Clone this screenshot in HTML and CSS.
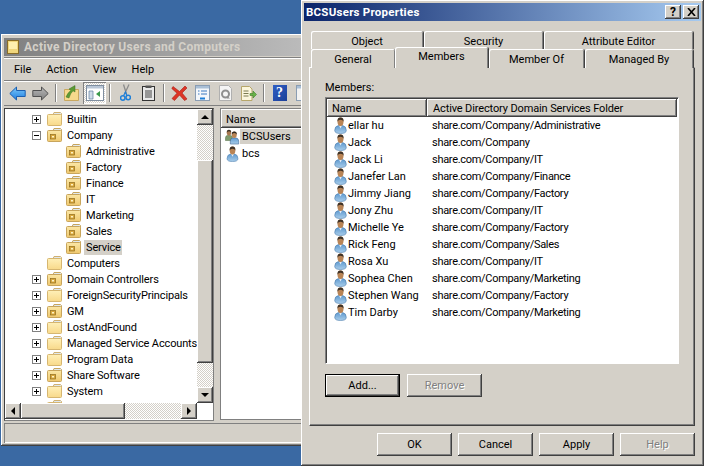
FILE: index.html
```html
<!DOCTYPE html>
<html lang="en">
<head>
    <meta charset="UTF-8">
    <title>BCSUsers Properties</title>
    <link rel="stylesheet" href="styles.css">
</head>
<body>
    <svg class="defs" width="0" height="0">
        <defs>
            <linearGradient id="folderFill" x1="0" y1="0" x2="0" y2="1">
                <stop offset="0" stop-color="#fff0b8"/>
                <stop offset="1" stop-color="#f8d98a"/>
            </linearGradient>
            <linearGradient id="ouFill" x1="0" y1="0" x2="0" y2="1">
                <stop offset="0" stop-color="#fbe7a6"/>
                <stop offset="1" stop-color="#efc86e"/>
            </linearGradient>
            <linearGradient id="bodyFill" x1="0" y1="0" x2="0" y2="1">
                <stop offset="0" stop-color="#5f9ad0"/>
                <stop offset="1" stop-color="#a9cdea"/>
            </linearGradient>
            <linearGradient id="backFill" x1="0" y1="0" x2="0" y2="1">
                <stop offset="0" stop-color="#7cc8fa"/>
                <stop offset="1" stop-color="#1f7fe0"/>
            </linearGradient>
            <linearGradient id="fwdFill" x1="0" y1="0" x2="0" y2="1">
                <stop offset="0" stop-color="#b8b8b8"/>
                <stop offset="1" stop-color="#808080"/>
            </linearGradient>
            <symbol id="folder" viewBox="0 0 15 14">
                <path d="M6 3l1-2.500h6.500l1 1V4z" fill="#dfe8ee" stroke="#d0b070"/>
                <rect x=".5" y="2.500" width="14" height="11" rx="1" fill="url(#folderFill)" stroke="#d6b670"/>
            </symbol>
            <symbol id="ou" viewBox="0 0 15 14">
                <path d="M6 3l1-2.500h6.500l1 1V4z" fill="#dfe8ee" stroke="#c8a55c"/>
                <rect x=".5" y="2.500" width="14" height="11" rx="1" fill="url(#ouFill)" stroke="#c8a55c"/>
                <rect x="3.500" y="6.500" width="5" height="4.500" fill="#d9a83e" stroke="#8f6c1c" stroke-width=".7"/>
                <rect x="5" y="8" width="2" height="1.500" fill="#fff3c4"/>
            </symbol>
            <symbol id="user" viewBox="0 0 13 17">
                <path d="M.7 13.500Q.7 9 4.500 8.500h4q3.800.5 3.800 5 0 3-5.800 3t-5.800-3z" fill="url(#bodyFill)" stroke="#4f7fae" stroke-width=".6"/>
                <path d="M5 8.500h3L6.500 11.500z" fill="#e9eef4"/>
                <ellipse cx="6.500" cy="4.800" rx="3" ry="4.200" fill="#b98455"/>
                <path d="M3.500 4.800Q3 .4 6.500.4T9.500 4.800Q9 2.800 6.500 2.800T3.500 4.800z" fill="#3f3226"/>
            </symbol>
            <symbol id="group" viewBox="0 0 17 17">
                <path d="M.5 12.500V9.500q0-2.500 2.500-3h3q2.500.5 2.500 3v3z" fill="#7f9a6c" stroke="#55704a" stroke-width=".6"/>
                <ellipse cx="4.500" cy="3.700" rx="2.500" ry="3.200" fill="#a9794f"/>
                <path d="M2 3.700Q1.800.4 4.500.4T7 3.700Q6.500 2 4.500 2T2 3.700z" fill="#3d3226"/>
                <path d="M6 16.500v-3.500q0-3 2.500-3.500h4q3 .5 3 3.500v3.500z" fill="url(#bodyFill)" stroke="#335d8c" stroke-width=".6"/>
                <ellipse cx="10.500" cy="6" rx="2.800" ry="3.600" fill="#b98455"/>
                <path d="M7.700 6Q7.400 2.300 10.500 2.300T13.300 6Q12.800 4 10.500 4T7.700 6z" fill="#2f2a24"/>
            </symbol>
            <symbol id="plus" viewBox="0 0 9 9">
                <rect x=".5" y=".5" width="8" height="8" fill="#fff" stroke="#808080"/>
                <path d="M2 4.500h5M4.500 2v5" stroke="#000"/>
            </symbol>
            <symbol id="minus" viewBox="0 0 9 9">
                <rect x=".5" y=".5" width="8" height="8" fill="#fff" stroke="#808080"/>
                <path d="M2 4.500h5" stroke="#000"/>
            </symbol>
        </defs>
    </svg>

    <div class="mmc">
        <div class="mmc-title">
            <svg class="app-icon" width="12" height="14" viewBox="0 0 12 14">
                <rect x=".5" y=".5" width="11" height="13" fill="#f0d67c" stroke="#8a6d28"/>
                <rect x="2" y="2" width="8" height="7" fill="#fff0b0"/>
            </svg>
            <span>Active Directory Users and Computers</span>
        </div>
        <div class="mmc-menu">
            <span>File</span><span>Action</span><span>View</span><span>Help</span>
        </div>
        <div class="mmc-toolbar">
            <span class="tool"><svg width="17" height="15" viewBox="0 0 17 15"><path d="M.8 7.500L7.500 1v3.500h8.700v6H7.500V14z" fill="url(#backFill)" stroke="#1c5fb0"/></svg></span>
            <span class="tool"><svg width="17" height="15" viewBox="0 0 17 15"><path d="M16.200 7.500L9.500 1v3.500H.8v6h8.700V14z" fill="url(#fwdFill)" stroke="#505050"/></svg></span>
            <i class="tool-sep"></i>
            <span class="tool"><svg width="15" height="16" viewBox="0 0 15 16"><path d="M.5 4.500h14v11H.5z" fill="#f6d98c" stroke="#c9a860"/><path d="M2 12q2-5 5-6.500L5 4l6-3.500V7L9 5.800Q6.500 8 5 13z" fill="#5c9a34" stroke="#3e7222" stroke-width=".5"/></svg></span>
            <span class="tool tool-on"><svg width="18" height="16" viewBox="0 0 18 16"><rect x=".5" y=".5" width="17" height="15" fill="#fff" stroke="#7f8ea0"/><rect x="1" y="1" width="16" height="2.500" fill="#b9c6d6"/><path d="M3 6h4v8H3z" fill="#cfdbe8" stroke="#5f7f9f" stroke-width=".7"/><path d="M14 6v6l-4-3z" fill="#3c9a4c"/></svg></span>
            <i class="tool-sep"></i>
            <span class="tool"><svg width="11" height="18" viewBox="0 0 11 18"><path d="M9 .5L4.500 10M3.500.5l3 9.500" stroke="#8c8c8c" stroke-width="1.300" fill="none"/><circle cx="2.800" cy="14" r="2.200" fill="none" stroke="#1f7fd8" stroke-width="1.500"/><circle cx="8.200" cy="13.500" r="2.200" fill="none" stroke="#1f7fd8" stroke-width="1.500"/><path d="M3.500 11.800L5.500 8l1.500 4" fill="none" stroke="#1f7fd8" stroke-width="1.200"/></svg></span>
            <span class="tool"><svg width="13" height="16" viewBox="0 0 13 16"><rect x=".5" y="1.500" width="12" height="14" fill="#e8e8e8" stroke="#333"/><rect x="3.500" y=".5" width="6" height="2.500" fill="#555"/><path d="M3 6h7M3 8h7M3 10h7M3 12h7" stroke="#444"/></svg></span>
            <i class="tool-sep"></i>
            <span class="tool"><svg width="17" height="16" viewBox="0 0 17 16"><path d="M2 1.500l6.500 5L14 1l2 2-5 5 5 6-2.500 1.500-5-5.500-5 5.500L1 13.500l5-5.300L.8 3.500z" fill="#dd3526" stroke="#a81c12" stroke-width=".6"/></svg></span>
            <span class="tool"><svg width="15" height="16" viewBox="0 0 15 16"><rect x=".5" y=".5" width="14" height="15" fill="#f4f7fb" stroke="#8a9db3"/><rect x="1" y="1" width="13" height="2.500" fill="#a9bfd6"/><path d="M3 6h1.500M6 6h6M3 9h1.500M6 9h6" stroke="#3b78c0"/><path d="M5 13.500h5" stroke="#1f7fd8" stroke-width="2"/></svg></span>
            <span class="tool"><svg width="13" height="16" viewBox="0 0 13 16"><path d="M.5.500h9l3 3v12H.5z" fill="#f4f4f4" stroke="#b0b0b0"/><circle cx="6.500" cy="9" r="3.500" fill="none" stroke="#8f8f8f" stroke-width="2"/><path d="M8 10.500l3 3H8z" fill="#8f8f8f"/></svg></span>
            <span class="tool"><svg width="16" height="15" viewBox="0 0 16 15"><path d="M.5.500h8l2.500 2.500v11.500H.5z" fill="#fbf6dc" stroke="#b6a66a"/><path d="M2.500 5h5M2.500 7.500h5M2.500 10h5" stroke="#7a7a50"/><path d="M9 7.500h3V5l3.500 3.500L12 12V9.500H9z" fill="#69b24a" stroke="#3f8228" stroke-width=".6"/></svg></span>
            <i class="tool-sep"></i>
            <span class="tool"><span class="tool-help">?</span></span>
            <span class="tool"><svg width="14" height="16" viewBox="0 0 14 16"><rect x=".5" y=".5" width="14" height="15" fill="#f2f2f2" stroke="#8a9db3"/><rect x="1" y="1" width="13" height="2.500" fill="#a9bfd6"/><path d="M5 6v7l5-3.500z" fill="#3c9a4c"/></svg></span>
        </div>
        <div class="mmc-panes">
            <div class="tree-pane">
                <div class="tree">
                    <div class="tree-row"><svg class="exp"><use href="#plus"/></svg><svg class="ico"><use href="#folder"/></svg><span>Builtin</span></div>
                    <div class="tree-row"><svg class="exp"><use href="#minus"/></svg><svg class="ico"><use href="#ou"/></svg><span>Company</span></div>
                    <div class="tree-row child"><svg class="ico"><use href="#ou"/></svg><span>Administrative</span></div>
                    <div class="tree-row child"><svg class="ico"><use href="#ou"/></svg><span>Factory</span></div>
                    <div class="tree-row child"><svg class="ico"><use href="#ou"/></svg><span>Finance</span></div>
                    <div class="tree-row child"><svg class="ico"><use href="#ou"/></svg><span>IT</span></div>
                    <div class="tree-row child"><svg class="ico"><use href="#ou"/></svg><span>Marketing</span></div>
                    <div class="tree-row child"><svg class="ico"><use href="#ou"/></svg><span>Sales</span></div>
                    <div class="tree-row child selected"><svg class="ico"><use href="#ou"/></svg><span>Service</span></div>
                    <div class="tree-row leaf"><svg class="ico"><use href="#folder"/></svg><span>Computers</span></div>
                    <div class="tree-row"><svg class="exp"><use href="#plus"/></svg><svg class="ico"><use href="#ou"/></svg><span>Domain Controllers</span></div>
                    <div class="tree-row"><svg class="exp"><use href="#plus"/></svg><svg class="ico"><use href="#folder"/></svg><span>ForeignSecurityPrincipals</span></div>
                    <div class="tree-row"><svg class="exp"><use href="#plus"/></svg><svg class="ico"><use href="#ou"/></svg><span>GM</span></div>
                    <div class="tree-row"><svg class="exp"><use href="#plus"/></svg><svg class="ico"><use href="#folder"/></svg><span>LostAndFound</span></div>
                    <div class="tree-row"><svg class="exp"><use href="#plus"/></svg><svg class="ico"><use href="#folder"/></svg><span>Managed Service Accounts</span></div>
                    <div class="tree-row"><svg class="exp"><use href="#plus"/></svg><svg class="ico"><use href="#folder"/></svg><span>Program Data</span></div>
                    <div class="tree-row"><svg class="exp"><use href="#plus"/></svg><svg class="ico"><use href="#ou"/></svg><span>Share Software</span></div>
                    <div class="tree-row"><svg class="exp"><use href="#plus"/></svg><svg class="ico"><use href="#folder"/></svg><span>System</span></div>
                    <div class="tree-row leaf"><svg class="ico"><use href="#folder"/></svg><span>Users</span></div>
                </div>
                <div class="vscroll">
                    <span class="sbtn"><i class="arr up"></i></span>
                    <span class="strack t-top"></span>
                    <span class="sthumb v"></span>
                    <span class="strack t-bot"></span>
                    <span class="sbtn"><i class="arr down"></i></span>
                </div>
                <div class="hscroll">
                    <span class="sbtn"><i class="arr left"></i></span>
                    <span class="sthumb h"></span>
                    <span class="strack t-fill"></span>
                    <span class="sbtn"><i class="arr right"></i></span>
                </div>
            </div>
            <div class="result-pane">
                <div class="result-head">Name</div>
                <div class="result-row"><svg class="ico-g"><use href="#group"/></svg><span class="picked">BCSUsers</span></div>
                <div class="result-row"><svg class="ico-g"><use href="#user"/></svg><span>bcs</span></div>
            </div>
        </div>
        <div class="mmc-status"></div>
    </div>

    <div class="dialog">
        <div class="dlg-title">
            <span>BCSUsers Properties</span>
            <div class="dlg-btns">
                <span class="cap-btn">?</span>
                <span class="cap-btn"><svg width="9" height="8" viewBox="0 0 9 8"><path d="M1 0l7 8M8 0L1 8" stroke="#000" stroke-width="1.600" fill="none"/></svg></span>
            </div>
        </div>
        <div class="tabs tabs-back">
            <span class="tab t-object">Object</span>
            <span class="tab t-security">Security</span>
            <span class="tab t-attr">Attribute Editor</span>
        </div>
        <div class="tabs tabs-front">
            <span class="tab t-general">General</span>
            <span class="tab t-members active">Members</span>
            <span class="tab t-memberof">Member Of</span>
            <span class="tab t-managed">Managed By</span>
        </div>
        <div class="panel">
            <div class="members-label">Members:</div>
            <div class="listview">
                <div class="lv-head">
                    <span class="lv-col col-name">Name</span>
                    <span class="lv-col col-folder">Active Directory Domain Services Folder</span>
                </div>
                <div class="lv-row"><svg class="ico-u"><use href="#user"/></svg><span class="cell-name">ellar hu</span><span class="cell-path">share.com/Company/Administrative</span></div>
                <div class="lv-row"><svg class="ico-u"><use href="#user"/></svg><span class="cell-name">Jack</span><span class="cell-path">share.com/Company</span></div>
                <div class="lv-row"><svg class="ico-u"><use href="#user"/></svg><span class="cell-name">Jack Li</span><span class="cell-path">share.com/Company/IT</span></div>
                <div class="lv-row"><svg class="ico-u"><use href="#user"/></svg><span class="cell-name">Janefer Lan</span><span class="cell-path">share.com/Company/Finance</span></div>
                <div class="lv-row"><svg class="ico-u"><use href="#user"/></svg><span class="cell-name">Jimmy Jiang</span><span class="cell-path">share.com/Company/Factory</span></div>
                <div class="lv-row"><svg class="ico-u"><use href="#user"/></svg><span class="cell-name">Jony Zhu</span><span class="cell-path">share.com/Company/IT</span></div>
                <div class="lv-row"><svg class="ico-u"><use href="#user"/></svg><span class="cell-name">Michelle Ye</span><span class="cell-path">share.com/Company/Factory</span></div>
                <div class="lv-row"><svg class="ico-u"><use href="#user"/></svg><span class="cell-name">Rick Feng</span><span class="cell-path">share.com/Company/Sales</span></div>
                <div class="lv-row"><svg class="ico-u"><use href="#user"/></svg><span class="cell-name">Rosa Xu</span><span class="cell-path">share.com/Company/IT</span></div>
                <div class="lv-row"><svg class="ico-u"><use href="#user"/></svg><span class="cell-name">Sophea Chen</span><span class="cell-path">share.com/Company/Marketing</span></div>
                <div class="lv-row"><svg class="ico-u"><use href="#user"/></svg><span class="cell-name">Stephen Wang</span><span class="cell-path">share.com/Company/Factory</span></div>
                <div class="lv-row"><svg class="ico-u"><use href="#user"/></svg><span class="cell-name">Tim Darby</span><span class="cell-path">share.com/Company/Marketing</span></div>
            </div>
            <div class="panel-btns">
                <span class="btn default">Add...</span>
                <span class="btn disabled">Remove</span>
            </div>
        </div>
        <div class="dlg-footer">
            <span class="btn">OK</span>
            <span class="btn">Cancel</span>
            <span class="btn">Apply</span>
            <span class="btn disabled">Help</span>
        </div>
    </div>
</body>
</html>
```

FILE: styles.css
```css
html, body {
    margin: 0;
    height: 100%;
}

body {
    position: relative;
    width: 704px;
    height: 466px;
    overflow: hidden;
    background: #3a69a3;
    font-family: Roboto, "Liberation Sans", sans-serif;
    font-size: 11px;
    color: #000;
}

.defs {
    position: absolute;
}

/* Windows Classic bevels */
.mmc, .dialog, .btn, .cap-btn, .sbtn, .sthumb, .lv-col, .result-head {
    box-shadow: inset -1px -1px #404040, inset 1px 1px #fff, inset -2px -2px #808080;
}

/* console window behind the dialog */
.mmc {
    position: absolute;
    left: 1px;
    top: 34px;
    width: 330px;
    height: 412px;
    box-sizing: border-box;
    padding: 4px 3px 3px;
    background: #d4d0c8;
    display: flex;
    flex-direction: column;
}

.mmc-title {
    height: 18px;
    display: flex;
    align-items: center;
    gap: 5px;
    padding-left: 3px;
    background: linear-gradient(90deg, #808080, #c0c0c0);
    color: #d4d0c8;
    font-weight: bold;
    font-size: 12px;
    letter-spacing: .3px;
    flex: none;
}

.mmc-menu {
    height: 24px;
    margin-top: 1px;
    display: flex;
    align-items: center;
    gap: 15px;
    padding-left: 10px;
    border-top: 1px solid #808080;
    border-bottom: 1px solid #808080;
    box-shadow: inset 0 1px #fff, 0 1px #fff;
    flex: none;
    box-sizing: border-box;
}

.mmc-toolbar {
    height: 25px;
    display: flex;
    align-items: center;
    padding-left: 2px;
    flex: none;
    border-bottom: 1px solid #808080;
    box-sizing: border-box;
}

.tool {
    width: 23px;
    height: 22px;
    display: flex;
    align-items: center;
    justify-content: center;
    flex: none;
}

.tool-sep {
    width: 1px;
    height: 18px;
    background: #808080;
    box-shadow: 1px 0 #fff;
    margin: 0 4px 0 3px;
    flex: none;
}

.tool-on {
    box-shadow: inset 1px 1px #808080, inset -1px -1px #fff;
    background: repeating-conic-gradient(#fff 0 25%, #d4d0c8 0 50%) 0 0 / 2px 2px;
}

.tool-help {
    width: 14px;
    height: 16px;
    background: linear-gradient(135deg, #2f5fc4, #1c3f98);
    color: #fff;
    font: bold 14px "Liberation Serif", serif;
    line-height: 16px;
    text-align: center;
}

.mmc-panes {
    flex: 1;
    min-height: 0;
    display: flex;
    gap: 6px;
    padding-top: 2px;
}

.tree-pane {
    width: 210px;
    flex: none;
    box-sizing: border-box;
    border: 1px solid #808080;
    border-left-color: #404040;
    border-top-color: #404040;
    background: #fff;
    display: grid;
    grid-template-columns: 192px 16px;
    grid-template-rows: 294px 16px;
    overflow: hidden;
}

.tree {
    overflow: hidden;
    padding-top: 2px;
}

.tree-row {
    height: 16px;
    display: flex;
    align-items: center;
    padding-left: 27px;
    white-space: nowrap;
}

.tree-row.leaf {
    padding-left: 42px;
}

.tree-row.child {
    padding-left: 61px;
}

.exp {
    width: 9px;
    height: 9px;
    margin-right: 6px;
    flex: none;
}

.ico {
    width: 15px;
    height: 14px;
    margin-right: 3px;
    flex: none;
}

.tree-row span {
    padding: 1px 1px 1px 2px;
    letter-spacing: -.14px;
}

.selected span {
    background: #d4d0c8;
}

.vscroll, .hscroll {
    display: flex;
    background: #d4d0c8;
}

.vscroll {
    flex-direction: column;
}

.hscroll {
    grid-column: 1;
}

.sbtn {
    width: 16px;
    height: 16px;
    flex: none;
    background: #d4d0c8;
    display: flex;
    align-items: center;
    justify-content: center;
}

.sthumb {
    background: #d4d0c8;
    flex: none;
}

.sthumb.v {
    height: 203px;
}

.sthumb.h {
    width: 104px;
}

.strack {
    background: repeating-conic-gradient(#fff 0 25%, #d4d0c8 0 50%) 0 0 / 2px 2px;
}

.t-top {
    height: 35px;
    flex: none;
}

.t-bot, .t-fill {
    flex: 1;
}

.arr {
    width: 0;
    height: 0;
    border: 4px solid transparent;
}

.arr.up {
    border-top: 0;
    border-bottom-color: #000;
}

.arr.down {
    border-bottom: 0;
    border-top-color: #000;
}

.arr.left {
    border-left: 0;
    border-right-color: #000;
}

.arr.right {
    border-right: 0;
    border-left-color: #000;
}

.result-pane {
    flex: 1;
    background: #fff;
    border: 1px solid #808080;
    border-right: 0;
    box-sizing: border-box;
    height: 312px;
}

.result-head {
    height: 19px;
    box-sizing: border-box;
    padding: 3px 0 0 5px;
    line-height: 16px;
    background: #d4d0c8;
}

.result-row {
    height: 17px;
    display: flex;
    align-items: center;
    padding-left: 4px;
}

.ico-g {
    width: 15px;
    height: 16px;
    flex: none;
}

.result-row span {
    padding: 1px 60px 1px 2px;
}

.picked {
    background: #d4d0c8;
}

.mmc-status {
    height: 20px;
    margin-top: 2px;
    flex: none;
    box-shadow: inset 1px 1px #808080, inset -1px -1px #fff;
}

/* properties dialog */
.dialog {
    position: absolute;
    left: 301px;
    top: 0;
    width: 403px;
    height: 466px;
    box-sizing: border-box;
    padding: 3px 3px 0;
    background: #d4d0c8;
}

.dlg-title {
    height: 18px;
    display: flex;
    align-items: center;
    justify-content: space-between;
    padding: 0 2px 0 2px;
    background: linear-gradient(90deg, #0a246a, #a6caf0);
    color: #fff;
    font-weight: bold;
    font-size: 11.500px;
    letter-spacing: .25px;
}

.dlg-btns {
    display: flex;
    gap: 2px;
}

.cap-btn {
    width: 16px;
    height: 14px;
    background: #d4d0c8;
    color: #000;
    font-weight: bold;
    font-size: 12px;
    line-height: 14px;
    display: flex;
    align-items: center;
    justify-content: center;
}

.tabs {
    display: flex;
    position: relative;
    margin-left: 7px;
}

.tabs-back {
    margin-top: 10px;
    height: 18px;
}

.tabs-front {
    height: 19px;
}

.tab {
    box-sizing: border-box;
    display: flex;
    align-items: center;
    justify-content: center;
    padding-top: 2px;
    border-radius: 2px 2px 0 0;
    background: #d4d0c8;
    box-shadow: inset 1px 1px #fff, inset -1px 0 #808080, 1px 0 #404040;
}

.t-object { width: 112px; }
.t-security { width: 119px; margin-left: 1px; }
.t-attr { width: 149px; margin-left: 1px; }
.t-general { width: 84px; }
.t-memberof { width: 95px; margin-left: 1px; }
.t-managed { width: 108px; margin-left: 1px; }

.t-members {
    width: 93px;
    height: 21px;
    margin-top: -2px;
    position: relative;
    z-index: 1;
    padding: 0 0 2px;
}

.panel {
    width: 386px;
    height: 359px;
    box-sizing: border-box;
    margin: -1px 0 0 5px;
    padding: 13px 15px 0;
    border: 1px solid #fff;
    border-right-color: #404040;
    border-bottom-color: #404040;
    box-shadow: inset -1px -1px #808080;
}

.members-label {
    height: 16px;
}

.listview {
    height: 267px;
    box-sizing: border-box;
    background: #fff;
    border: 1px solid #808080;
    border-right-color: #fff;
    border-bottom-color: #fff;
    box-shadow: inset 1px 1px #404040;
    padding: 1px 1px 0;
}

.lv-head {
    display: flex;
    height: 18px;
}

.lv-col {
    box-sizing: border-box;
    background: #d4d0c8;
    display: flex;
    align-items: center;
    padding-left: 5px;
    white-space: nowrap;
}

.col-name {
    width: 100px;
}

.col-folder {
    flex: 1;
    padding-left: 6px;
    letter-spacing: -.13px;
}

.lv-row {
    display: flex;
    align-items: center;
    height: 17px;
    padding-left: 7px;
}

.ico-u {
    width: 13px;
    height: 17px;
    flex: none;
    margin-right: 1px;
}

.cell-name {
    width: 84px;
    flex: none;
}

.cell-path {
    letter-spacing: -.3px;
}

.panel-btns {
    display: flex;
    gap: 7px;
    margin-top: 10px;
}

.btn {
    width: 75px;
    height: 23px;
    box-sizing: border-box;
    display: flex;
    align-items: center;
    justify-content: center;
    background: #d4d0c8;
}

.btn.default {
    border: 1px solid #000;
}

.btn.disabled {
    color: #808080;
    text-shadow: 1px 1px #fff;
}

.dlg-footer {
    display: flex;
    justify-content: flex-end;
    gap: 6px;
    padding: 7px 6px 0 0;
}
```
